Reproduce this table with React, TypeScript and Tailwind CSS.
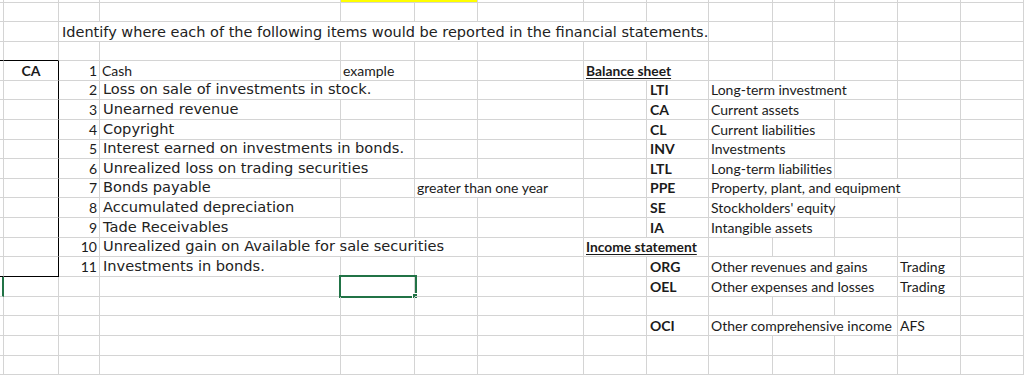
import React from "react";

type Kind = "title" | "big" | "small" | "num" | "code" | "head" | "tag";
type Cell = { c: number; span?: number; text: string; kind: Kind };

// column widths incl. right gridline: edge, A..M
const GRID =
  "grid grid-cols-[4px_55px_41px_241px_74px_63px_106px_63px_62px_64px_62px_63px_63px_63px]";
const NCOLS = 14;

const ROW_H: string[] = [
  "h-[3px]", "h-[19px]", "h-[20px]", "h-[19px]", "h-[20px]",
  "h-[19px]", "h-[20px]", "h-[20px]", "h-[19px]", "h-[20px]",
  "h-[19px]", "h-[20px]", "h-[20px]", "h-[19px]", "h-[20px]",
  "h-[20px]", "h-[19px]", "h-[20px]", "h-[20px]", "h-[19px]",
];

const SPAN: Record<number, string> = {
  1: "col-span-1",
  2: "col-span-2",
  3: "col-span-3",
  4: "col-span-4",
  7: "col-span-7",
};

const KIND: Record<Kind, string> = {
  title: "pl-[3px] pb-[2px] font-['DejaVu_Sans',sans-serif] text-[14.5px] text-[#222]",
  big: "pl-[3px] pb-[2px] font-['DejaVu_Sans',sans-serif] text-[14.6px] text-[#222]",
  small: "pl-[2px] pb-[2px] font-['Lato',sans-serif] text-[14px]",
  num: "justify-end pr-[2px] pb-[2px] font-['Lato',sans-serif] text-[14px]",
  code: "pl-[3px] pb-[2px] font-['Lato',sans-serif] text-[14px] font-bold",
  head: "pl-[2px] pb-[2px] font-['Lato',sans-serif] text-[13.8px] font-bold underline underline-offset-2",
  tag: "justify-center pb-[2px] font-['Lato',sans-serif] text-[14px] font-bold",
};

const ROWS: Record<number, Cell[]> = {
  2: [
    {
      c: 2,
      span: 7,
      kind: "title",
      text: "Identify where each of the following items would be reported in the financial statements.",
    },
  ],
  4: [
    { c: 1, kind: "tag", text: "CA" },
    { c: 2, kind: "num", text: "1" },
    { c: 3, kind: "small", text: "Cash" },
    { c: 4, kind: "small", text: "example" },
    { c: 7, span: 2, kind: "head", text: "Balance sheet" },
  ],
  5: [
    { c: 2, kind: "num", text: "2" },
    { c: 3, span: 2, kind: "big", text: "Loss on sale of investments in stock." },
    { c: 8, kind: "code", text: "LTI" },
    { c: 9, span: 3, kind: "small", text: "Long-term investment" },
  ],
  6: [
    { c: 2, kind: "num", text: "3" },
    { c: 3, kind: "big", text: "Unearned revenue" },
    { c: 8, kind: "code", text: "CA" },
    { c: 9, span: 2, kind: "small", text: "Current assets" },
  ],
  7: [
    { c: 2, kind: "num", text: "4" },
    { c: 3, kind: "big", text: "Copyright" },
    { c: 8, kind: "code", text: "CL" },
    { c: 9, span: 2, kind: "small", text: "Current liabilities" },
  ],
  8: [
    { c: 2, kind: "num", text: "5" },
    { c: 3, span: 2, kind: "big", text: "Interest earned on investments in bonds." },
    { c: 8, kind: "code", text: "INV" },
    { c: 9, span: 2, kind: "small", text: "Investments" },
  ],
  9: [
    { c: 2, kind: "num", text: "6" },
    { c: 3, span: 2, kind: "big", text: "Unrealized loss on trading securities" },
    { c: 8, kind: "code", text: "LTL" },
    { c: 9, span: 2, kind: "small", text: "Long-term liabilities" },
  ],
  10: [
    { c: 2, kind: "num", text: "7" },
    { c: 3, kind: "big", text: "Bonds payable" },
    { c: 5, span: 2, kind: "small", text: "greater than one year" },
    { c: 8, kind: "code", text: "PPE" },
    { c: 9, span: 4, kind: "small", text: "Property, plant, and equipment" },
  ],
  11: [
    { c: 2, kind: "num", text: "8" },
    { c: 3, kind: "big", text: "Accumulated depreciation" },
    { c: 8, kind: "code", text: "SE" },
    { c: 9, span: 2, kind: "small", text: "Stockholders' equity" },
  ],
  12: [
    { c: 2, kind: "num", text: "9" },
    { c: 3, kind: "big", text: "Tade Receivables" },
    { c: 8, kind: "code", text: "IA" },
    { c: 9, span: 2, kind: "small", text: "Intangible assets" },
  ],
  13: [
    { c: 2, kind: "num", text: "10" },
    { c: 3, span: 3, kind: "big", text: "Unrealized gain on Available for sale securities" },
    { c: 7, span: 2, kind: "head", text: "Income statement" },
  ],
  14: [
    { c: 2, kind: "num", text: "11" },
    { c: 3, kind: "big", text: "Investments in bonds." },
    { c: 8, kind: "code", text: "ORG" },
    { c: 9, span: 3, kind: "small", text: "Other revenues and gains" },
    { c: 12, kind: "small", text: "Trading" },
  ],
  15: [
    { c: 8, kind: "code", text: "OEL" },
    { c: 9, span: 3, kind: "small", text: "Other expenses and losses" },
    { c: 12, kind: "small", text: "Trading" },
  ],
  17: [
    { c: 8, kind: "code", text: "OCI" },
    { c: 9, span: 3, kind: "small", text: "Other comprehensive income" },
    { c: 12, kind: "small", text: "AFS" },
  ],
};

// the bordered "CA" box over the edge column and column A, rows 4-14
function borders(r: number, c: number, last: number) {
  const inBoxCols = c <= 1;
  const right =
    last === 1 && r >= 4 && r <= 14
      ? "border-r-black"
      : c === 0 && r === 15
        ? "border-r-2 border-r-[#217346]"
        : "border-r-[#d4d4d4]";
  const bottom =
    inBoxCols && (r === 3 || r === 14) ? "border-b-black" : "border-b-[#d4d4d4]";
  return `border-r border-b ${right} ${bottom}`;
}

function Row({ r }: { r: number }) {
  const cells = ROWS[r] ?? [];
  const out: React.ReactNode[] = [];
  let c = 0;
  while (c < NCOLS) {
    const cell = cells.find((x) => x.c === c);
    if (r === 0 && c === 4) {
      // yellow fill of the row above, barely visible
      out.push(
        <div key={c} className={`${SPAN[2]} bg-[#ffff00] ${borders(r, 5, 5)}`} />
      );
      c += 2;
      continue;
    }
    if (cell) {
      const span = cell.span ?? 1;
      out.push(
        <div
          key={c}
          className={`${SPAN[span]} flex items-end overflow-visible whitespace-nowrap leading-none text-[#1b1b1b] ${KIND[cell.kind]} ${borders(r, c, c + span - 1)}`}
        >
          {cell.text}
        </div>
      );
      c += span;
      continue;
    }
    out.push(
      <div key={c} className={`relative ${borders(r, c, c)}`}>
        {r === 15 && c === 4 && (
          <>
            <div className="absolute -left-[2px] -top-[2px] h-[23px] w-[78px] border-2 border-[#217346]" />
            <div className="absolute left-[71px] top-[16px] h-[6px] w-[6px] border border-white bg-[#217346]" />
          </>
        )}
      </div>
    );
    c += 1;
  }
  return <div className={`${GRID} ${ROW_H[r]}`}>{out}</div>;
}

export default function App() {
  return (
    <div className="h-[375px] w-[1024px] overflow-hidden bg-white">
      {ROW_H.map((_, r) => (
        <Row key={r} r={r} />
      ))}
    </div>
  );
}
